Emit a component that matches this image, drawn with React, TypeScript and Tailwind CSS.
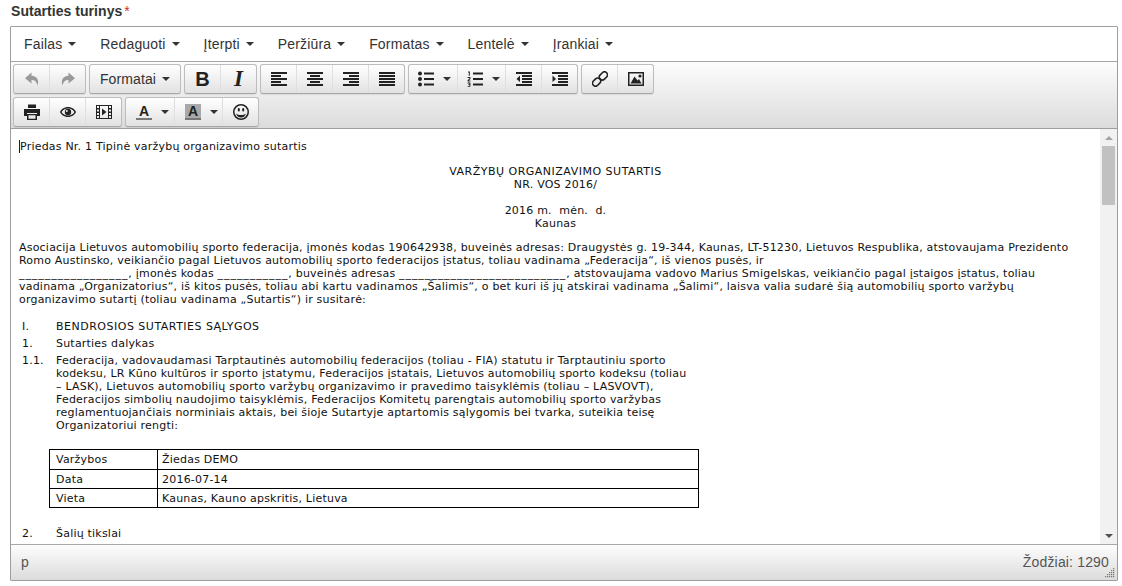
import React from "react";

const Caret = ({ c = "border-t-[#333]" }: { c?: string }) => (
  <span className={`inline-block w-0 h-0 border-x-4 border-x-transparent border-t-4 ${c}`} />
);

const menus = ["Failas", "Redaguoti", "Įterpti", "Peržiūra", "Formatas", "Lentelė", "Įrankiai"];

const Ic = ({ children, c = "#222" }: { children: React.ReactNode; c?: string }) => (
  <svg width="16" height="16" viewBox="0 0 16 16" fill={c} className="block shrink-0">
    {children}
  </svg>
);

const bars = (rows: [number, number][]) =>
  rows.map(([x, w], i) => <rect key={i} x={x} y={1 + i * 3} width={w} height="2" />);

const Undo = () => (
  <Ic c="#9a9a9a">
    <path d="M7.5 1.5 L1 7.2 L7.5 12.5 V9 C10.5 8.8 12.6 10.5 13.5 14.5 C15.4 9.5 13 5 7.5 4.8 Z" />
  </Ic>
);
const Redo = () => (
  <Ic c="#9a9a9a">
    <path d="M8.5 1.5 L15 7.2 L8.5 12.5 V9 C5.5 8.8 3.4 10.5 2.5 14.5 C0.6 9.5 3 5 8.5 4.8 Z" />
  </Ic>
);
const AlignL = () => <Ic>{bars([[0, 16], [0, 10], [0, 16], [0, 10], [0, 16]])}</Ic>;
const AlignC = () => <Ic>{bars([[0, 16], [3, 10], [0, 16], [3, 10], [0, 16]])}</Ic>;
const AlignR = () => <Ic>{bars([[0, 16], [6, 10], [0, 16], [6, 10], [0, 16]])}</Ic>;
const AlignJ = () => <Ic>{bars([[0, 16], [0, 16], [0, 16], [0, 16], [0, 16]])}</Ic>;
const Bullets = () => (
  <Ic>
    <circle cx="2" cy="2.5" r="2" />
    <circle cx="2" cy="8" r="2" />
    <circle cx="2" cy="13.5" r="2" />
    <rect x="6" y="1.5" width="10" height="2" />
    <rect x="6" y="7" width="10" height="2" />
    <rect x="6" y="12.5" width="10" height="2" />
  </Ic>
);
const Numbers = () => (
  <Ic>
    <path d="M1 0.5 H2.8 V4.8 H1.8 V1.5 H1 Z M0.6 6 H3.4 V8 L1.8 9.5 H3.4 V10.4 H0.6 V9.2 L2.4 7.6 V7 H0.6 Z M0.6 11.5 H3.4 V15.8 H0.6 V14.9 H2.4 V14.1 H1.2 V13.3 H2.4 V12.4 H0.6 Z" />
    <rect x="6" y="1.5" width="10" height="2" />
    <rect x="6" y="7" width="10" height="2" />
    <rect x="6" y="12.5" width="10" height="2" />
  </Ic>
);
const Outdent = () => (
  <Ic>
    <rect x="0" y="1" width="16" height="2" />
    <rect x="6" y="4" width="10" height="2" />
    <rect x="6" y="7" width="10" height="2" />
    <rect x="6" y="10" width="10" height="2" />
    <rect x="0" y="13" width="16" height="2" />
    <path d="M4 4.5 V11 L0.5 8 Z" />
  </Ic>
);
const Indent = () => (
  <Ic>
    <rect x="0" y="1" width="16" height="2" />
    <rect x="6" y="4" width="10" height="2" />
    <rect x="6" y="7" width="10" height="2" />
    <rect x="6" y="10" width="10" height="2" />
    <rect x="0" y="13" width="16" height="2" />
    <path d="M0.5 4.5 V11 L4 8 Z" />
  </Ic>
);
const Link = () => (
  <Ic>
    <g fill="none" stroke="#222" strokeWidth="1.6">
      <rect x="8.4" y="0.4" width="6" height="9" rx="3" transform="rotate(45 11.4 4.9)" />
      <rect x="1.6" y="6.6" width="6" height="9" rx="3" transform="rotate(45 4.6 11.1)" />
    </g>
  </Ic>
);
const Image = () => (
  <Ic>
    <path fillRule="evenodd" d="M0 1 H16 V15 H0 Z M1.5 2.5 V13.5 H14.5 V2.5 Z" />
    <path d="M2.5 12.5 L6.5 5.5 L9.5 9.5 L11 8 L13.5 12.5 Z" />
    <circle cx="12" cy="5" r="1.6" />
  </Ic>
);
const Print = () => (
  <Ic>
    <rect x="4" y="0.5" width="8" height="3.5" />
    <path d="M0 5 H16 V12 H13 V9 H3 V12 H0 Z" />
    <path fillRule="evenodd" d="M3 10 H13 V16 H3 Z M4.5 11.3 V14.7 H11.5 V11.3 Z" />
  </Ic>
);
const Eye = () => (
  <Ic>
    <path
      fillRule="evenodd"
      d="M8 3 C12 3 15 5.5 16 8 C15 10.5 12 13 8 13 C4 13 1 10.5 0 8 C1 5.5 4 3 8 3 Z M8 4.4 C5 4.4 2.6 6 1.6 8 C2.6 10 5 11.6 8 11.6 C11 11.6 13.4 10 14.4 8 C13.4 6 11 4.4 8 4.4 Z"
    />
    <path
      fillRule="evenodd"
      d="M8 4.8 A3.2 3.2 0 1 1 8 11.2 A3.2 3.2 0 1 1 8 4.8 Z M6.8 6 A1 1 0 1 0 6.8 8 A1 1 0 1 0 6.8 6 Z"
    />
  </Ic>
);
const Media = () => (
  <Ic>
    <path
      fillRule="evenodd"
      d="M0 1 H16 V15 H0 Z M1 2 V4 H3 V2 Z M1 5.5 V7.5 H3 V5.5 Z M1 9 V11 H3 V9 Z M1 12 V14 H3 V12 Z M13 2 V4 H15 V2 Z M13 5.5 V7.5 H15 V5.5 Z M13 9 V11 H15 V9 Z M13 12 V14 H15 V12 Z M4 2 V14 H12 V2 Z"
    />
    <path d="M6 4.5 L10.5 8 L6 11.5 Z" />
  </Ic>
);
const Smile = () => (
  <Ic>
    <path
      fillRule="evenodd"
      d="M8 0 A8 8 0 1 1 8 16 A8 8 0 1 1 8 0 Z M8 1.5 A6.5 6.5 0 1 0 8 14.5 A6.5 6.5 0 1 0 8 1.5 Z"
    />
    <rect x="4.8" y="4" width="2" height="3.6" rx="1" />
    <rect x="9.2" y="4" width="2" height="3.6" rx="1" />
    <path d="M3.2 9.5 C4.5 10.6 6 11 8 11 C10 11 11.5 10.6 12.8 9.5 C12.4 12 10.4 13.4 8 13.4 C5.6 13.4 3.6 12 3.2 9.5 Z" />
  </Ic>
);
const Bold = () => (
  <span className="block w-4 text-center font-['Liberation_Sans',sans-serif] font-bold text-[20px] leading-4 text-[#222]">B</span>
);
const Italic = () => (
  <span className="block w-4 text-center font-['Liberation_Serif',serif] font-bold italic text-[23px] leading-4 text-[#222]">I</span>
);
const ColorA = ({ hl }: { hl?: boolean }) => (
  <span className={`flex w-4 h-4 flex-col items-center border-b-2 border-b-[#777] ${hl ? "bg-[#a8a8a8]" : ""}`}>
    <span className="font-['Liberation_Sans',sans-serif] font-bold text-[14px] leading-[14px] text-[#222]">A</span>
  </span>
);

const Btn = ({
  children,
  first,
  w = "w-9",
}: {
  children: React.ReactNode;
  first?: boolean;
  w?: string;
}) => (
  <div
    className={`${w} h-full flex items-center justify-center ${
      first ? "" : "border-l border-l-[#dfdfdf]"
    }`}
  >
    {children}
  </div>
);

const SplitBtn = ({
  children,
  first,
  pl,
}: {
  children: React.ReactNode;
  first?: boolean;
  pl: string;
}) => (
  <div
    className={`w-12 h-full flex items-center justify-start gap-[9px] ${pl} ${
      first ? "" : "border-l border-l-[#dfdfdf]"
    }`}
  >
    {children}
    <Caret />
  </div>
);

const Group = ({ children }: { children: React.ReactNode }) => (
  <div className="flex h-[30px] rounded-[3px] border border-[#bdbdbd] border-b-[#a6a6a6] bg-gradient-to-b from-[#ffffff] to-[#e2e2e2] shadow-[0_1px_1px_rgba(0,0,0,0.08)]">
    {children}
  </div>
);

const Sub = ({ children, className = "" }: { children: React.ReactNode; className?: string }) => (
  <div className={`whitespace-pre ${className}`}>{children}</div>
);

const Blank = ({ children }: { children: string }) => (
  <span className="tracking-[0.93px]">{children}</span>
);

const clause = [
  "Federacija, vadovaudamasi Tarptautinės automobilių federacijos (toliau - FIA) statutu ir Tarptautiniu sporto",
  "kodeksu, LR Kūno kultūros ir sporto įstatymu, Federacijos įstatais, Lietuvos automobilių sporto kodeksu (toliau",
  "– LASK), Lietuvos automobilių sporto varžybų organizavimo ir pravedimo taisyklėmis (toliau – LASVOVT),",
  "Federacijos simbolių naudojimo taisyklėmis, Federacijos Komitetų parengtais automobilių sporto varžybas",
  "reglamentuojančiais norminiais aktais, bei šioje Sutartyje aptartomis sąlygomis bei tvarka, suteikia teisę",
  "Organizatoriui rengti:",
];
const rows = [
  ["Varžybos", "Žiedas DEMO"],
  ["Data", "2016-07-14"],
  ["Vieta", "Kaunas, Kauno apskritis, Lietuva"],
];

export default function App() {
  return (
    <div className="w-[1122px] h-[586px] bg-white overflow-hidden pl-[10px] pr-[4px] pt-[2px] font-['Liberation_Sans',Arial,sans-serif]">
      <div className="h-6 flex items-start pl-[1px] pt-[1px] text-[14px] leading-[16px] font-bold text-[#333] tracking-[0.05px]">
        Sutarties turinys<span className="ml-[2px] font-normal text-[#c9302c]">*</span>
      </div>
      <div className="h-[555px] flex flex-col border border-[#9e9e9e] rounded-[1px]">
        <div className="h-[35px] shrink-0 flex items-center pl-[13px] bg-white border-b border-b-[#a8a8a8] text-[14px] text-[#333] tracking-[0.16px]">
          {menus.map((m) => (
            <div key={m} className="flex items-center gap-[6px] mr-6">
              <span>{m}</span>
              <Caret />
            </div>
          ))}
        </div>
        <div className="h-[67px] shrink-0 flex flex-col gap-[3px] pl-[2px] pt-[2px] bg-gradient-to-b from-[#fdfdfd] to-[#dcdcdc] border-b border-b-[#9e9e9e]">
          <div className="flex gap-[3px]">
            <Group>
              <Btn first w="w-[35px]"><Undo /></Btn>
              <Btn><Redo /></Btn>
            </Group>
            <Group>
              <div className="w-[90px] h-full flex items-center justify-center gap-[6px] text-[14px] text-[#333] tracking-[0.1px]">
                <span>Formatai</span>
                <Caret />
              </div>
            </Group>
            <Group>
              <Btn first w="w-[35px]"><Bold /></Btn>
              <Btn><Italic /></Btn>
            </Group>
            <Group>
              <Btn first w="w-[35px]"><AlignL /></Btn>
              <Btn><AlignC /></Btn>
              <Btn><AlignR /></Btn>
              <Btn><AlignJ /></Btn>
            </Group>
            <Group>
              <SplitBtn first pl="pl-[9px]"><Bullets /></SplitBtn>
              <SplitBtn pl="pl-[9px]"><Numbers /></SplitBtn>
              <Btn><Outdent /></Btn>
              <Btn><Indent /></Btn>
            </Group>
            <Group>
              <Btn first w="w-[35px]"><Link /></Btn>
              <Btn><Image /></Btn>
            </Group>
          </div>
          <div className="flex gap-[3px]">
            <Group>
              <Btn first w="w-[35px]"><Print /></Btn>
              <Btn><Eye /></Btn>
              <Btn><Media /></Btn>
            </Group>
            <Group>
              <SplitBtn first pl="pl-[10px]"><ColorA /></SplitBtn>
              <SplitBtn pl="pl-[10px]"><ColorA hl /></SplitBtn>
              <Btn><Smile /></Btn>
            </Group>
          </div>
        </div>
        <div className="flex-1 min-h-0 flex">
          <div className="flex-1 min-w-0 overflow-hidden pl-2 pr-2 pt-[11px] font-['DejaVu_Sans',Verdana,sans-serif] text-[11px] leading-[13px] text-[#111] tracking-[0.21px]">
            <Sub className="border-l border-l-[#222]">Priedas Nr. 1 Tipinė varžybų organizavimo sutartis</Sub>
            <div className="mt-[12px] text-center">
              <div className="tracking-[0.5px]">VARŽYBŲ ORGANIZAVIMO SUTARTIS</div>
              <div>NR. VOS 2016/</div>
              <div className="mt-[13px] whitespace-pre">2016 m.  mėn.  d.</div>
              <div>Kaunas</div>
            </div>
            <div className="mt-[11px]">
              <Sub>Asociacija Lietuvos automobilių sporto federacija, įmonės kodas 190642938, buveinės adresas: Draugystės g. 19-344, Kaunas, LT-51230, Lietuvos Respublika, atstovaujama Prezidento</Sub>
              <Sub>Romo Austinsko, veikiančio pagal Lietuvos automobilių sporto federacijos įstatus, toliau vadinama „Federacija“, iš vienos pusės, ir</Sub>
              <Sub>
                <Blank>_________________</Blank>, įmonės kodas <Blank>___________</Blank>, buveinės adresas <Blank>__________________________</Blank>, atstovaujama vadovo Marius Smigelskas, veikiančio pagal įstaigos įstatus, toliau
              </Sub>
              <Sub>vadinama „Organizatorius“, iš kitos pusės, toliau abi kartu vadinamos „Šalimis“, o bet kuri iš jų atskirai vadinama „Šalimi“, laisva valia sudarė šią automobilių sporto varžybų</Sub>
              <Sub>organizavimo sutartį (toliau vadinama „Sutartis“) ir susitarė:</Sub>
            </div>
            <div className="mt-[14px] flex">
              <div className="w-[37px] pl-[3px]">I.</div>
              <div className="tracking-[0.5px]">BENDROSIOS SUTARTIES SĄLYGOS</div>
            </div>
            <div className="mt-[4px] flex">
              <div className="w-[37px] pl-[3px]">1.</div>
              <div>Sutarties dalykas</div>
            </div>
            <div className="mt-[4px] flex">
              <div className="w-[37px] pl-[3px]">1.1.</div>
              <div>
                {clause.map((l) => (
                  <Sub key={l}>{l}</Sub>
                ))}
              </div>
            </div>
            <div className="mt-[17px] ml-[30px] w-[650px] border border-black">
              {rows.map(([a, b], i) => (
                <div
                  key={a}
                  className={`flex items-center ${i === 0 ? "h-[19px]" : i === 1 ? "h-[20px] border-y border-y-black" : "h-[18px]"}`}
                >
                  <div className="w-[108px] h-full flex items-center pl-[6px] border-r border-r-black">{a}</div>
                  <div className="pl-[4px]">{b}</div>
                </div>
              ))}
            </div>
            <div className="mt-[19px] flex">
              <div className="w-[37px] pl-[3px]">2.</div>
              <div>Šalių tikslai</div>
            </div>
          </div>
          <div className="w-[17px] shrink-0 flex flex-col items-center bg-[#f1f1f1]">
            <div className="h-[17px] w-full flex items-center justify-center">
              <span className="w-0 h-0 border-x-[4px] border-x-transparent border-b-[4px] border-b-[#a3a3a3]" />
            </div>
            <div className="w-[13px] h-[59px] bg-[#c1c1c1]" />
            <div className="flex-1" />
            <div className="h-[17px] w-full flex items-center justify-center">
              <span className="w-0 h-0 border-x-[4px] border-x-transparent border-t-[4px] border-t-[#505050]" />
            </div>
          </div>
        </div>
        <div className="relative h-[36px] shrink-0 flex items-center justify-between pl-[10px] pr-[8px] bg-gradient-to-b from-[#fdfdfd] to-[#dcdcdc] border-t border-t-[#a8a8a8] text-[14px] text-[#555] tracking-[0.16px]">
          <span>p</span>
          <span>Žodžiai: 1290</span>
          <svg width="10" height="10" viewBox="0 0 10 10" fill="#7a7a5a" className="absolute right-[2px] bottom-[2px]">
            {[[8, 0], [6, 2], [8, 2], [4, 4], [6, 4], [8, 4], [2, 6], [4, 6], [6, 6], [8, 6], [0, 8], [2, 8], [4, 8], [6, 8], [8, 8]].map(([x, y]) => (
              <rect key={`${x}-${y}`} x={x} y={y} width="1.2" height="1.2" />
            ))}
          </svg>
        </div>
      </div>
    </div>
  );
}
